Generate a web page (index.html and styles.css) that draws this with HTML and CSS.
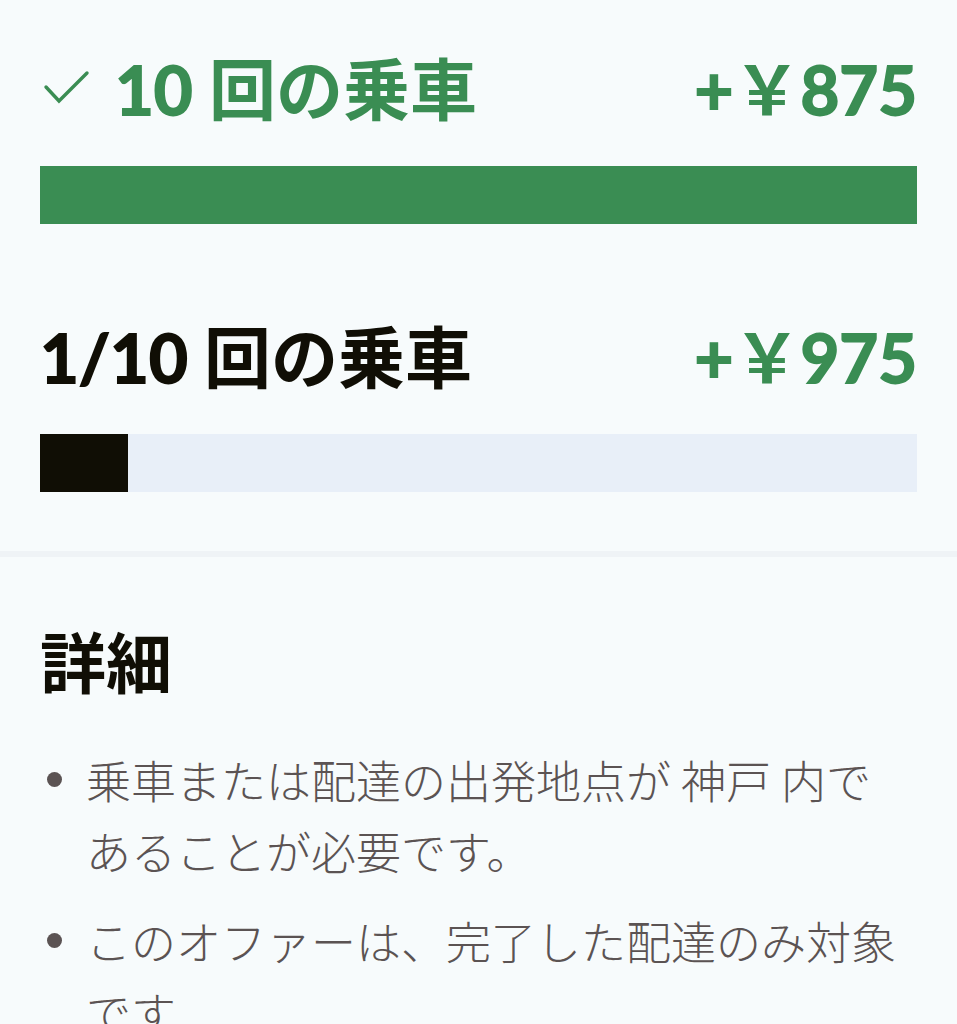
FILE: index.html
```html
<!DOCTYPE html>
<html lang="ja">
<head>
<meta charset="utf-8">
<title>Offer</title>
<link rel="stylesheet" href="styles.css">
</head>
<body>
<div class="goals">
  <div class="goal">
    <div class="goal-head">
      <div class="goal-title done">
        <svg class="check" viewBox="0 0 48 36" width="48" height="36"><path d="M4 17 L17 31 L45 3" fill="none" stroke="currentColor" stroke-width="3.4" stroke-linecap="round" stroke-linejoin="miter"/></svg>
        <span><span class="num">10</span> 回の乗車</span>
      </div>
      <div class="goal-amount"><span class="num">+</span>￥<span class="num">875</span></div>
    </div>
    <div class="bar bar-done"><div class="fill" style="width:100%"></div></div>
  </div>
  <div class="goal">
    <div class="goal-head">
      <div class="goal-title"><span><span class="num">1/10</span> 回の乗車</span></div>
      <div class="goal-amount"><span class="num">+</span>￥<span class="num">975</span></div>
    </div>
    <div class="bar"><div class="fill" style="width:10%"></div></div>
  </div>
</div>
<div class="divider"></div>
<section class="details">
  <h2 class="details-title">詳細</h2>
  <ul class="details-list">
    <li>乗車または配達の出発地点が 神戸 内であることが必要です。</li>
    <li>このオファーは、完了した配達のみ対象です</li>
  </ul>
</section>
</body>
</html>
```
FILE: styles.css
```css
html, body {
  margin: 0;
  padding: 0;
  background: #f7fbfc;
}
body {
  font-family: "Lato", "Noto Sans CJK JP", sans-serif;
  color: #100e05;
}
.goals {
  padding: 49px 40px 59px;
}
.goal + .goal {
  margin-top: 93px;
}
.goal-head {
  display: flex;
  justify-content: space-between;
  align-items: center;
  height: 80px;
  margin-bottom: 37px;
  font-size: 67px;
  font-weight: 700;
  line-height: 80px;
}
.num {
  font-weight: 700;
  -webkit-text-stroke: 1.8px currentColor;
}
.goal-title {
  display: flex;
  align-items: center;
  gap: 25px;
  color: #100e05;
}
.goal-title.done {
  color: #3a8d53;
}
.check {
  display: block;
  margin-left: 2px;
  margin-top: -2px;
}
.goal-amount {
  color: #3a8d53;
}
.bar {
  height: 58px;
  background: #e8eff8;
}
.bar .fill {
  height: 100%;
  background: #100e05;
}
.bar-done .fill {
  background: #3a8d53;
}
.divider {
  height: 6px;
  background: #eff3f6;
}
.details {
  padding: 62px 47px 40px 40px;
}
.details-title {
  margin: 0 0 45px;
  font-family: "Noto Sans CJK JP", sans-serif;
  font-size: 66px;
  font-weight: 700;
  line-height: 80px;
  color: #100e05;
}
.details-list {
  list-style: none;
  margin: 0;
  padding: 0;
}
.details-list li {
  position: relative;
  padding-left: 46px;
  margin-bottom: 19px;
  font-family: "Noto Sans CJK JP", sans-serif;
  font-size: 45px;
  font-weight: 300;
  line-height: 71px;
  color: #5b5353;
}
.details-list li::before {
  content: "";
  position: absolute;
  left: 7px;
  top: 28px;
  width: 15px;
  height: 15px;
  border-radius: 50%;
  background: #5b5353;
}
```
